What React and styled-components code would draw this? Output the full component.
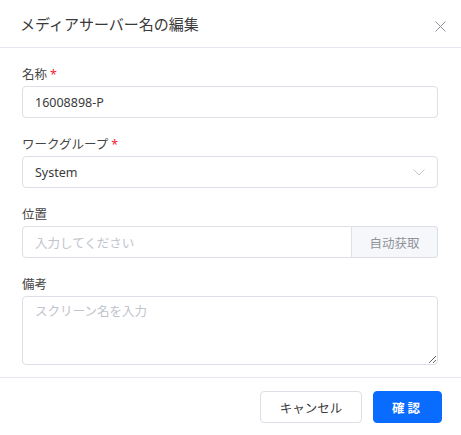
import React from 'react'
import styled, { createGlobalStyle } from 'styled-components'

const GlobalStyle = createGlobalStyle`
  html, body {
    margin: 0;
    padding: 0;
    background: #fff;
  }
  body {
    font-family: "Noto Sans", "Noto Sans CJK JP", sans-serif;
    color: #303133;
  }
  * { box-sizing: border-box; }
`

const Dialog = styled.div`
  width: 461px;
  height: 435px;
  background: #fff;
  display: flex;
  flex-direction: column;
`

const Header = styled.div`
  height: 48px;
  display: flex;
  align-items: center;
  justify-content: space-between;
  padding: 0 13px 0 20px;
  border-bottom: 1px solid #e4e7ed;
`

const Title = styled.div`
  font-size: 15px;
  color: #3a3a3a;
  margin-top: -1px;
`

const Close = styled.button`
  border: 0;
  background: none;
  padding: 0;
  width: 16px;
  height: 16px;
  display: flex;
  align-items: center;
  justify-content: center;
  margin-top: 5px;
  cursor: pointer;
`

const Body = styled.div`
  padding: 17px 23px 12px 22px;
  display: flex;
  flex-direction: column;
  gap: 17px;
  border-bottom: 1px solid #e4e7ed;
`

const Item = styled.div`
  display: flex;
  flex-direction: column;
  gap: 1px;
`

const Label = styled.label`
  font-size: 12.5px;
  line-height: 20px;
  color: #444;
`

const Star = styled.span`
  color: #f5222d;
  margin-left: 3px;
`

const Field = styled.div`
  height: 32px;
  border: 1px solid #dcdfe6;
  border-radius: 4px;
  display: flex;
  align-items: center;
  padding: 0 12px;
  font-size: 12.5px;
  color: ${(p) => (p.$placeholder ? '#c0c4cc' : '#3a3a3a')};
  justify-content: space-between;
`

const Group = styled.div`
  display: flex;
  height: 32px;
`

const GroupField = styled(Field)`
  flex: 1;
  border-radius: 4px 0 0 4px;
`

const Addon = styled.div`
  width: 86px;
  background: #f5f7fa;
  border: 1px solid #dcdfe6;
  border-left: 0;
  border-radius: 0 4px 4px 0;
  display: flex;
  align-items: center;
  justify-content: center;
  font-size: 12.5px;
  color: #909399;
`

const TextArea = styled.textarea`
  height: 69px;
  border: 1px solid #dcdfe6;
  border-radius: 4px;
  padding: 5px 12px;
  font-family: inherit;
  font-size: 12.5px;
  line-height: 20px;
  resize: vertical;
  outline: none;
  color: #333;
  &::placeholder { color: #c0c4cc; }
`

const Footer = styled.div`
  display: flex;
  justify-content: flex-end;
  gap: 11px;
  padding: 13px 19px 0 0;
`

const Button = styled.button`
  height: 32px;
  border-radius: 4px;
  font-family: inherit;
  font-size: 12.5px;
  cursor: pointer;
  border: 1px solid ${(p) => (p.$primary ? '#0a6cff' : '#dcdfe6')};
  background: ${(p) => (p.$primary ? '#0a6cff' : '#fff')};
  color: ${(p) => (p.$primary ? '#fff' : '#3a3a3a')};
  width: ${(p) => (p.$primary ? '69px' : '102px')};
  letter-spacing: ${(p) => (p.$primary ? '3px' : '0')};
  font-weight: ${(p) => (p.$primary ? 600 : 400)};
`

export default function App() {
  return (
    <>
      <GlobalStyle />
      <Dialog>
        <Header>
          <Title>メディアサーバー名の編集</Title>
          <Close aria-label="close">
            <svg width="11" height="11" viewBox="0 0 11 11">
              <path d="M0.5 0.5 L10.5 10.5 M10.5 0.5 L0.5 10.5" stroke="#909399" strokeWidth="1" fill="none" />
            </svg>
          </Close>
        </Header>
        <Body>
          <Item>
            <Label>名称<Star>*</Star></Label>
            <Field>16008898-P</Field>
          </Item>
          <Item>
            <Label>ワークグループ<Star>*</Star></Label>
            <Field>
              System
              <svg width="12" height="7" viewBox="0 0 12 7">
                <path d="M0.5 0.5 L6 6 L11.5 0.5" stroke="#c0c4cc" strokeWidth="1" fill="none" />
              </svg>
            </Field>
          </Item>
          <Item>
            <Label>位置</Label>
            <Group>
              <GroupField $placeholder>入力してください</GroupField>
              <Addon>自动获取</Addon>
            </Group>
          </Item>
          <Item>
            <Label>備考</Label>
            <TextArea placeholder="スクリーン名を入力" />
          </Item>
        </Body>
        <Footer>
          <Button>キャンセル</Button>
          <Button $primary>確認</Button>
        </Footer>
      </Dialog>
    </>
  )
}
